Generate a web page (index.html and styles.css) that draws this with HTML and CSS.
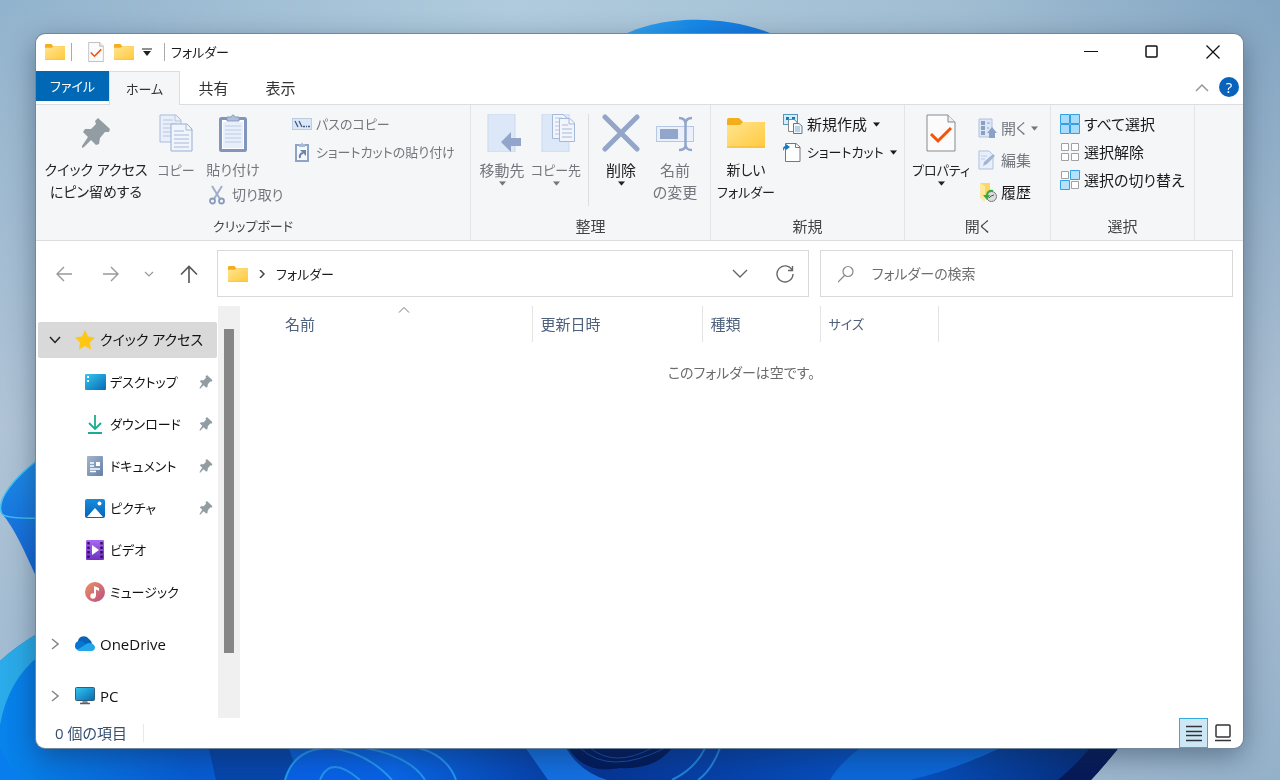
FILE: index.html
```html
<!DOCTYPE html>
<html lang="ja">
<head>
<meta charset="utf-8">
<meta name="viewport" content="width=device-width, initial-scale=1">
<title>フォルダー</title>
<link rel="stylesheet" href="styles.css">
</head>
<body>
<svg class="wallpaper" viewBox="0 0 1280 780" preserveAspectRatio="xMidYMid slice" aria-hidden="true">
  <defs>
    <linearGradient id="sky" x1="0" y1="0" x2="1" y2="0"><stop offset="0" stop-color="#92b3cd"/><stop offset=".4" stop-color="#b0cbdd"/><stop offset=".75" stop-color="#a0bdd2"/><stop offset="1" stop-color="#83a5c2"/></linearGradient>
    <linearGradient id="haze" x1="0" y1="0" x2="0" y2="1"><stop offset="0" stop-color="#c3cedb" stop-opacity="0"/><stop offset=".55" stop-color="#c3cedb" stop-opacity=".6"/><stop offset="1" stop-color="#a6bdd2" stop-opacity=".5"/></linearGradient>
    <linearGradient id="crest" x1="0" y1="0" x2="1" y2="0"><stop offset="0" stop-color="#36a9f2"/><stop offset=".5" stop-color="#1688ea"/><stop offset="1" stop-color="#1470d8"/></linearGradient>
    <linearGradient id="petal" x1="0" y1="0" x2="0" y2="1"><stop offset="0" stop-color="#1d8ce8"/><stop offset="1" stop-color="#1261d6"/></linearGradient>
    <linearGradient id="base" x1="0" y1="0" x2="1" y2="0"><stop offset="0" stop-color="#0784ec"/><stop offset=".17" stop-color="#075bd2"/><stop offset=".35" stop-color="#0967e8"/><stop offset=".53" stop-color="#063596"/><stop offset=".8" stop-color="#0754c8"/><stop offset="1" stop-color="#05276f"/></linearGradient>
  </defs>
  <rect width="1280" height="780" fill="url(#sky)"/>
  <rect width="1280" height="780" fill="url(#haze)"/>
  <path d="M615 40C655 13 735 13 785 40Z" fill="url(#crest)"/>
  <path d="M40 458C15 477-5 500 2 514C14 527 24 550 40 585Z" fill="url(#petal)"/>
  <path d="M40 458C15 477-5 500 2 514Q8 519 40 518" fill="none" stroke="#40c4f4" stroke-width="1.5"/>
  <path d="M0 661Q16 646 40 632V740H1125Q1105 765 1091 780H0Z" fill="url(#base)"/>
  <path d="M0 661Q16 646 40 632V655Q8 680 0 725Z" fill="#2babe9"/>
  <path d="M0 748Q8 768 24 780H0Z" fill="#087dee"/>
  <path d="M207 740H285C292 755 296 768 298 780H216Z" fill="#0646ac"/>
  <path d="M285 780Q294 748 330 748Q367 752 392 780" fill="#0862e7" stroke="#259af2" stroke-width="2"/>
  <path d="M320 780Q330 754 360 780M365 748Q410 756 425 780M418 748Q447 755 456 780" fill="none" stroke="#2395ef" stroke-width="2"/>
  <path d="M520 740H562Q575 770 607 780H548Z" fill="#1470e2"/>
  <path d="M568 748Q585 775 620 768Q655 770 672 748Z" fill="#021b5c"/>
  <path d="M590 748Q615 768 652 748M580 748Q610 776 665 748" fill="none" stroke="#144dad"/>
  <path d="M705 748Q696 768 672 780M720 748Q712 770 698 780" fill="none" stroke="#2185df" stroke-width="2"/>
  <path d="M860 748Q838 765 830 780H910Q960 768 1000 748Z" fill="#0b68da"/>
  <path d="M1090 740H1125Q1105 765 1091 780H1058Q1077 764 1090 748Z" fill="#061a59"/>
</svg>

<svg class="defs" aria-hidden="true">
  <defs>
    <linearGradient id="gold" x1="0" y1="0" x2="1" y2="1"><stop offset="0" stop-color="#ffe591"/><stop offset="1" stop-color="#ffc93d"/></linearGradient>
    <linearGradient id="desk" x1="0" y1="0" x2="1" y2="1"><stop offset="0" stop-color="#35c8ee"/><stop offset="1" stop-color="#0669b5"/></linearGradient>
    <linearGradient id="pic" x1="0" y1="0" x2="0" y2="1"><stop offset="0" stop-color="#168ddd"/><stop offset="1" stop-color="#0763b7"/></linearGradient>
    <linearGradient id="vid" x1="0" y1="0" x2="0" y2="1"><stop offset="0" stop-color="#a968f2"/><stop offset="1" stop-color="#7131c4"/></linearGradient>
    <linearGradient id="mus" x1="0" y1="0" x2="1" y2="1"><stop offset="0" stop-color="#ef9263"/><stop offset="1" stop-color="#b64f82"/></linearGradient>
    <linearGradient id="docg" x1="0" y1="0" x2="1" y2="1"><stop offset="0" stop-color="#a3b6cd"/><stop offset="1" stop-color="#647fa7"/></linearGradient>
    <symbol id="folder" viewBox="0 0 38 32"><path d="M0 3Q0 1 2 1H11Q13 1 14 3L16 5H37Q38 5 38 6V14H0Z" fill="#f5ae1b"/><path d="M0 8H13L16 5H37Q38 5 38 7V30Q38 31 37 31H1Q0 31 0 30Z" fill="url(#gold)"/><path d="M0 30H38" stroke="#f3bb33"/></symbol>
    <symbol id="pin" viewBox="0 0 28 30"><path d="M16 0L28 11L27 14L23 14L18 20L17 26L14 27L9 22L2 29L0 30L0 28L6 19L1 14L3 11L9 11L14 6L13 3Z" fill="#929ca3"/></symbol>
    <symbol id="checked" viewBox="0 0 30 38"><path d="M1 1H22L29 8V37H1Z" fill="#fbfbfb" stroke="#858b91"/><path d="M22 1V8H29" fill="#eee" stroke="#858b91"/><path d="M5 20L12 27L25 14" fill="none" stroke="#f4530c" stroke-width="3"/></symbol>
    <symbol id="pages" viewBox="0 0 34 38"><path d="M1 1H17L22 6V28H1Z" fill="#e8effa" stroke="#a9bcdc"/><path d="M16 1V7H22M4 6H14M4 10H18M4 14H18M4 18H18M4 22H18" fill="none" stroke="#b4c5e1"/><path d="M12 10H28L33 15V37H12Z" fill="#f0f5fc" stroke="#9aafd1"/><path d="M27 10V16H33M15 17H25M15 21H30M15 25H30M15 29H30M15 33H30" fill="none" stroke="#a7badb"/></symbol>
    <symbol id="down" viewBox="0 0 10 5"><path d="M1 0H9L5 5Z" fill="currentColor"/></symbol>
    <symbol id="right" viewBox="0 0 8 12"><path d="M1 1L7 6L1 11" fill="none" stroke="currentColor" stroke-width="1.5"/></symbol>
  </defs>
</svg>

<main class="window">
  <header class="titlebar">
    <svg class="i20" viewBox="0 0 38 32"><use href="#folder"/></svg>
    <span class="bar"></span>
    <button class="quick" aria-label="プロパティ"><svg class="i16" viewBox="0 0 30 38"><use href="#checked"/></svg></button>
    <button class="quick" aria-label="新しいフォルダー"><svg class="i20" viewBox="0 0 38 32"><use href="#folder"/></svg></button>
    <button class="quick more" aria-label="カスタマイズ"><svg width="10" height="8" viewBox="0 0 10 8"><path d="M0 1H10" stroke="#222"/><path d="M1 3H9L5 8Z" fill="#222"/></svg></button>
    <span class="bar"></span>
    <h1 class="kana">フォルダー</h1>
    <div class="controls">
      <button aria-label="最小化"><svg width="14" height="14" viewBox="0 0 14 14"><path d="M0 6.5H14" stroke="#111"/></svg></button>
      <button aria-label="最大化"><svg width="14" height="14" viewBox="0 0 14 14"><rect x="1" y="1" width="11" height="11" rx="1" fill="none" stroke="#111" stroke-width="1.5"/></svg></button>
      <button aria-label="閉じる"><svg width="14" height="14" viewBox="0 0 14 14"><path d="M.5 .5L13.5 13.5M13.5 .5L.5 13.5" stroke="#111" stroke-width="1.3"/></svg></button>
    </div>
  </header>

  <nav class="tabs" aria-label="リボン">
    <button class="file kana">ファイル</button>
    <button class="active kana">ホーム</button>
    <button>共有</button>
    <button>表示</button>
    <span class="grow"></span>
    <button class="collapse" aria-label="リボンの最小化"><svg width="14" height="8" viewBox="0 0 14 8"><path d="M1 7L7 1L13 7" fill="none" stroke="#999" stroke-width="1.5"/></svg></button>
    <button class="help" aria-label="ヘルプ">?</button>
  </nav>

  <section class="ribbon">
    <div class="group clipboard">
      <div class="tools">
        <button class="big pinbtn"><svg width="28" height="38" viewBox="0 0 28 30"><use href="#pin"/></svg><span class="mixed">クイック アクセス<br>にピン留めする</span></button>
        <button class="big copy off"><svg width="34" height="38" viewBox="0 0 34 38"><use href="#pages"/></svg><span class="kana">コピー</span></button>
        <div class="paste">
          <button class="big off"><svg width="28" height="38" viewBox="0 0 28 38"><rect x="1.5" y="4.5" width="25" height="32" rx="1" fill="#fff" stroke="#8296bd" stroke-width="3"/><rect x="4" y="8" width="20" height="26" fill="#e8effa"/><path d="M6 12H22M6 16H22M6 20H22M6 24H22M6 28H22" stroke="#bccbe4"/><path d="M8 7V3H12Q14-1 16 3H20V7Z" fill="#b1bfda" stroke="#879abd"/></svg><span class="mixed">貼り付け</span></button>
          <button class="row off cut"><svg width="16" height="20" viewBox="0 0 16 20"><path d="M3 1L11 14M13 1L5 14" stroke="#9fafc9" stroke-width="2"/><circle cx="3.5" cy="16" r="2.5" fill="none" stroke="#8a9cbb" stroke-width="1.8"/><circle cx="12.5" cy="16" r="2.5" fill="none" stroke="#8a9cbb" stroke-width="1.8"/></svg><span class="mixed">切り取り</span></button>
        </div>
        <div class="stack">
          <button class="row off"><svg width="20" height="20" viewBox="0 0 20 20"><rect x=".5" y="4.5" width="19" height="11" fill="#dce7f6" stroke="#bccce5"/><path d="M3 7L6 13M7 7L10 13M11 12.5H13M14 12.5H15M16 12.5H18" stroke="#40577f" stroke-width="1.3"/></svg><span class="kana">パスのコピー</span></button>
          <button class="row off"><svg width="20" height="20" viewBox="0 0 20 20"><rect x="4" y="3" width="12" height="16" fill="#f5f8fd" stroke="#8fa3c5" stroke-width="2"/><path d="M7 5V2H9Q10-1 11 2H13V5Z" fill="#a9b9d4"/><path d="M8 16Q7 12 11 11" fill="none" stroke="#6c84ae" stroke-width="2"/><path d="M8 8H14V14Z" fill="#6c84ae"/></svg><span class="kana">ショートカットの貼り付け</span></button>
        </div>
      </div>
      <h2 class="kana">クリップボード</h2>
    </div>

    <div class="group organize">
      <div class="tools">
        <button class="big off"><svg width="38" height="38" viewBox="0 0 38 38"><path d="M5 0H32V38H5Z" fill="#dce7f7" stroke="#cbd9ef"/><path d="M18 28L28 18V24H38V32H28V38Z" fill="#91a6ca"/></svg><span>移動先</span><svg class="arrow" viewBox="0 0 10 5"><use href="#down"/></svg></button>
        <button class="big off"><svg width="38" height="38" viewBox="0 0 38 38"><path d="M5 0H32V38H5Z" fill="#dce7f7" stroke="#cbd9ef"/><path d="M15.5 .5H26L31 5V24.5H15.5Z" fill="#f2f6fc" stroke="#a4b8d9"/><path d="M18 4H25M18 8H28M18 12H28M18 16H28M18 20H28" stroke="#b2c4e1"/><path d="M22.5 4.5H33L37.5 9V27.5H22.500Z" fill="#f2f6fc" stroke="#a4b8d9"/><path d="M32 4.5V10H37M25 11H31M25 15H35M25 19H35M25 23H35" fill="none" stroke="#a4b8d9"/></svg><span class="kana">コピー先</span><svg class="arrow" viewBox="0 0 10 5"><use href="#down"/></svg></button>
        <span class="split"></span>
        <button class="big"><svg width="38" height="38" viewBox="0 0 38 38"><path d="M3 3L35 35M35 3L3 35" stroke="#94a6c8" stroke-width="5" stroke-linecap="round"/></svg><span>削除</span><svg class="arrow" viewBox="0 0 10 5"><use href="#down"/></svg></button>
        <button class="big off"><svg width="38" height="38" viewBox="0 0 38 38"><rect x=".5" y="12.5" width="37" height="15" fill="#eaf1fc" stroke="#b5c7e3"/><rect x="4" y="15" width="18" height="10" fill="#91a6ca"/><path d="M23 4Q29 4 29.5 9V32Q29 36 23 36M36 4Q30 4 29.5 9M29.5 31Q30 36 36 36" fill="none" stroke="#91a6ca" stroke-width="2.5"/></svg><span>名前<br>の変更</span></button>
      </div>
      <h2>整理</h2>
    </div>

    <div class="group new">
      <div class="tools">
        <button class="big"><svg width="38" height="38" viewBox="0 0 38 32"><use href="#folder"/></svg><span class="mixed">新しい</span><span class="kana">フォルダー</span></button>
        <div class="stack">
          <button class="row"><svg width="20" height="20" viewBox="0 0 20 20"><rect x=".5" y=".5" width="14" height="10" fill="#d3efff" stroke="#5597bb"/><path d="M3 3H6V6H3ZM9 3H12V6H9Z" fill="#127cb7"/><path d="M5.5 5.5H11L14 8V17.5H5.5Z" fill="#fff" stroke="#888"/><path d="M10.5 9.5H16L19 12V19.5H10.5Z" fill="#eef6fd" stroke="#64798b"/><path d="M12 13H17M12 15H17M12 17H17" stroke="#8aa9c1"/></svg><span>新規作成</span><svg class="arrow" viewBox="0 0 10 5"><use href="#down"/></svg></button>
          <button class="row"><svg width="20" height="20" viewBox="0 0 20 20"><path d="M2.5 1.5H13L17 5V19.5H2.5Z" fill="#fff" stroke="#777"/><path d="M12.5 1.5V5.5H17" fill="none" stroke="#777"/><path d="M0 7Q0 4 3 4V2L7 5L3 8V6Q1 6 0 9Z" fill="#1478bd"/></svg><span class="kana">ショートカット</span><svg class="arrow" viewBox="0 0 10 5"><use href="#down"/></svg></button>
        </div>
      </div>
      <h2>新規</h2>
    </div>

    <div class="group open">
      <div class="tools">
        <button class="big"><svg width="30" height="38" viewBox="0 0 30 38"><use href="#checked"/></svg><span class="kana">プロパティ</span><svg class="arrow" viewBox="0 0 10 5"><use href="#down"/></svg></button>
        <div class="stack airy">
          <button class="row off"><svg width="20" height="20" viewBox="0 0 20 20"><path d="M1 1H14V19H1Z" fill="#dce7f7" stroke="#b0c2df"/><path d="M3 3H7V7H3ZM3 8H7V12H3ZM3 13H7V17H3Z" fill="#8b9fc3"/><path d="M9 5H12M9 10H11" stroke="#91a6ca"/><path d="M14 9L19 15H17V20H11V15H9Z" fill="#8ca1c6"/></svg><span>開く</span><svg class="arrow" viewBox="0 0 10 5"><use href="#down"/></svg></button>
          <button class="row off"><svg width="20" height="20" viewBox="0 0 20 20"><path d="M1 1H11L15 5V19H1Z" fill="#e8effa" stroke="#afc1df"/><path d="M5 16L6 12L15 4L17 6L9 14Z" fill="#a3b5d3"/><path d="M3 6H9M3 9H7" stroke="#bccce5"/></svg><span>編集</span></button>
          <button class="row"><svg width="20" height="20" viewBox="0 0 20 20"><path d="M2 1H12V19L8 16H2Z" fill="#ffd566"/><path d="M2 1L7 4V20L2 16Z" fill="#ffe9a0"/><circle cx="13.5" cy="14.5" r="5" fill="#ddd" stroke="#747b7f"/><path d="M11 16L13 14L16 13" fill="none" stroke="#555"/><path d="M15 9Q9 8 9 14" fill="none" stroke="#2fae3c" stroke-width="2"/><path d="M5 13L9 18L12 13Z" fill="#2fae3c"/></svg><span>履歴</span></button>
        </div>
      </div>
      <h2>開く</h2>
    </div>

    <div class="group select">
      <div class="tools">
        <div class="stack">
          <button class="row"><svg width="20" height="20" viewBox="0 0 20 20"><path d="M.5 .5H9.5V9.5H.5ZM10.5 .5H19.5V9.5H10.5ZM.5 10.5H9.5V19.5H.5ZM10.5 10.5H19.5V19.5H10.5Z" fill="#a9dcfb" stroke="#359fe4"/></svg><span>すべて選択</span></button>
          <button class="row"><svg width="20" height="20" viewBox="0 0 20 20"><path d="M1.5 1.5H8.5V8.5H1.5ZM11.5 1.5H18.5V8.5H11.5ZM1.5 11.5H8.5V18.5H1.5ZM11.5 11.5H18.5V18.5H11.5Z" fill="#fff" stroke="#a2a2a2"/></svg><span>選択解除</span></button>
          <button class="row"><svg width="20" height="20" viewBox="0 0 20 20"><path d="M1.5 1.5H8.5V8.5H1.5ZM11.5 11.5H18.5V18.5H11.5Z" fill="#fff" stroke="#a2a2a2"/><path d="M10.5 .5H19.5V9.5H10.5ZM.5 10.5H9.5V19.5H.5Z" fill="#b5e1fc" stroke="#359fe4"/></svg><span>選択の切り替え</span></button>
        </div>
      </div>
      <h2>選択</h2>
    </div>
  </section>

  <section class="navigation">
    <div class="history">
      <button aria-label="戻る"><svg width="18" height="18" viewBox="0 0 18 18"><path d="M17 9H2M9 2L2 9L9 16" fill="none" stroke="#999" stroke-width="1.4"/></svg></button>
      <button aria-label="進む"><svg width="18" height="18" viewBox="0 0 18 18"><path d="M1 9H16M9 2L16 9L9 16" fill="none" stroke="#999" stroke-width="1.4"/></svg></button>
      <button class="recent" aria-label="最近表示した場所"><svg width="10" height="6" viewBox="0 0 10 6"><path d="M1 1L5 5L9 1" fill="none" stroke="#999" stroke-width="1.2"/></svg></button>
      <button class="up" aria-label="上へ"><svg width="18" height="18" viewBox="0 0 18 18"><path d="M9 18V2M1 9.5L9 1.5L17 9.5" fill="none" stroke="#555" stroke-width="1.6"/></svg></button>
    </div>
    <div class="address">
      <svg class="i20" viewBox="0 0 38 32"><use href="#folder"/></svg>
      <svg class="crumb" viewBox="0 0 6 8"><path d="M1 0L5 4L1 8" fill="none" stroke="#444" stroke-width="1.5"/></svg>
      <button class="kana">フォルダー</button>
      <span class="grow"></span>
      <button class="toggle" aria-label="以前の場所"><svg width="16" height="10" viewBox="0 0 16 10"><path d="M1 1L8 8L15 1" fill="none" stroke="#666" stroke-width="1.4"/></svg></button>
      <button class="toggle" aria-label="最新の情報に更新"><svg width="18" height="18" viewBox="0 0 18 18"><path d="M16 5A8 8 0 1 0 17 9M16.5 1V5.5H12" fill="none" stroke="#666" stroke-width="1.4"/></svg></button>
    </div>
    <label class="search"><svg width="16" height="18" viewBox="0 0 16 18"><circle cx="10" cy="6.5" r="5" fill="none" stroke="#888" stroke-width="1.2"/><path d="M6.5 10.5L0 17" stroke="#888" stroke-width="1.2"/></svg><input class="mixed" type="search" placeholder="フォルダーの検索" aria-label="フォルダーの検索"></label>
  </section>

  <div class="content">
    <nav class="sidebar" aria-label="ナビゲーション">
      <a href="#quick" class="root selected mixed"><svg class="chev" viewBox="0 0 12 8"><path d="M1 1L6 6.5L11 1" fill="none" stroke="#222" stroke-width="1.5"/></svg><svg width="20" height="20" viewBox="0 0 20 20"><path d="M10 0L13 6.5L20 7.5L15 12.5L16 19.5L10 16L4 19.5L5 12.5L0 7.5L7 6.5Z" fill="#ffc714"/></svg><span>クイック アクセス</span></a>
      <a href="#desktop" class="kana"><svg width="22" height="20" viewBox="0 0 22 20"><rect x="1" y="2" width="21" height="16" rx="1" fill="url(#desk)"/><path d="M3 4H5V6H3ZM3 8H5V10H3Z" fill="#fff"/></svg><span>デスクトップ</span><svg class="pinned" viewBox="0 0 28 30"><use href="#pin"/></svg></a>
      <a href="#downloads" class="kana"><svg width="22" height="20" viewBox="0 0 22 20"><path d="M11 1V15M5 9L11 15L17 9M4 19H18" fill="none" stroke="#19ae8f" stroke-width="1.8"/></svg><span>ダウンロード</span><svg class="pinned" viewBox="0 0 28 30"><use href="#pin"/></svg></a>
      <a href="#documents" class="kana"><svg width="22" height="20" viewBox="0 0 22 20"><rect x="3" width="16" height="20" rx="1" fill="url(#docg)"/><path d="M6 7H10M6 10H10M6 13H16M6 15.5H12" stroke="#fff" stroke-width="1.5"/><rect x="12" y="6" width="4" height="4" fill="#fff"/></svg><span>ドキュメント</span><svg class="pinned" viewBox="0 0 28 30"><use href="#pin"/></svg></a>
      <a href="#pictures" class="kana"><svg width="22" height="20" viewBox="0 0 22 20"><rect x="1" y="1" width="20" height="19" rx="2" fill="url(#pic)"/><path d="M3 19L11 10L19 19Z" fill="#fff"/><circle cx="15.5" cy="5.5" r="2" fill="#fff"/></svg><span>ピクチャ</span><svg class="pinned" viewBox="0 0 28 30"><use href="#pin"/></svg></a>
      <a href="#videos" class="kana"><svg width="22" height="20" viewBox="0 0 22 20"><rect x="2" width="18" height="20" rx="1" fill="url(#vid)"/><path d="M4.5 2V19M17.5 2V19" stroke="#32115f" stroke-width="2.5" stroke-dasharray="2.5 2"/><path d="M8 5L15 10L8 15Z" fill="#fff"/></svg><span>ビデオ</span></a>
      <a href="#music" class="kana"><svg width="22" height="20" viewBox="0 0 22 20"><circle cx="11" cy="10" r="10" fill="url(#mus)"/><circle cx="9" cy="14" r="2.7" fill="#fff"/><path d="M10 14V4L15 6V9L12 7.5V14Z" fill="#fff"/></svg><span>ミュージック</span></a>
      <a href="#onedrive" class="root"><svg class="chev" viewBox="0 0 8 12"><use href="#right"/></svg><svg width="20" height="20" viewBox="0 0 20 20"><path d="M3 9A6 6 0 0 1 14 5Q17 7 17 11L19 13H2Z" fill="#0864b8"/><path d="M0 12Q0 7 5 7Q8 7 11 10L13 16H4Q0 16 0 12Z" fill="#0875d1"/><path d="M2 16L13 9Q19 9 20 13Q20 17 16 17H4Z" fill="#23a5ea"/></svg><span>OneDrive</span></a>
      <a href="#pc" class="root"><svg class="chev" viewBox="0 0 8 12"><use href="#right"/></svg><svg width="20" height="20" viewBox="0 0 20 20"><path d="M8 14H12L13 17H7Z" fill="#8a959e"/><rect x=".5" y="1.5" width="19" height="13" rx="1" fill="url(#desk)" stroke="#315f7b"/><path d="M5 17.5H15" stroke="#54616b" stroke-width="1.5"/></svg><span>PC</span></a>
    </nav>
    <div class="scrollbar"><span></span></div>
    <section class="files">
      <table>
        <thead><tr><th class="name" scope="col"><span>名前</span><svg class="sort" viewBox="0 0 12 6"><path d="M1 5.5L6 .5L11 5.5" fill="none" stroke="#777"/></svg></th><th class="date" scope="col">更新日時</th><th class="kind" scope="col">種類</th><th class="kind kana" scope="col">サイズ</th><td class="rest"></td></tr></thead>
      </table>
      <p class="mixed">このフォルダーは空です。</p>
    </section>
  </div>

  <footer class="status">
    <span class="count">0 個の項目</span>
    <span class="grow"></span>
    <button class="on" aria-label="詳細"><svg width="18" height="18" viewBox="0 0 18 18"><path d="M1 2.5H17M1 7.5H17M1 11.5H17M1 16.5H17" stroke="#333" stroke-width="1.5"/></svg></button>
    <button aria-label="大アイコン"><svg width="18" height="18" viewBox="0 0 18 18"><rect x="2" y="1" width="14" height="12" rx="1" fill="#fff" stroke="#333" stroke-width="1.5"/><path d="M1 16.5H17" stroke="#333" stroke-width="1.5"/></svg></button>
  </footer>
</main>
</body>
</html>
```

FILE: styles.css
```css
* { box-sizing: border-box; }

body {
  margin: 0;
  min-height: 100vh;
  padding: 34px 37px 32px 36px;
  display: flex;
  background: #9fb8cc;
  color: #1b1b1b;
  font: 15px/22px "Open Sans", "Noto Sans CJK JP", sans-serif;
  font-feature-settings: "palt";
}

button, input {
  margin: 0;
  padding: 0;
  border: 0;
  background: none;
  color: inherit;
  font: inherit;
  font-feature-settings: inherit;
}

h1, h2, p { margin: 0; font-size: 15px; font-weight: 400; }
svg { flex: none; display: block; }
a { color: inherit; text-decoration: none; }

.kana { font-size: 13px; }
.mixed { font-size: 14px; }

.wallpaper { position: fixed; inset: 0; width: 100%; height: 100%; z-index: -1; }
.defs { position: absolute; width: 0; height: 0; }
.grow { flex: 1; }
.i20 { width: 20px; height: 18px; }
.i16 { width: 16px; height: 20px; }

.window {
  flex: 1;
  min-width: 0;
  display: flex;
  flex-direction: column;
  overflow: hidden;
  background: #fff;
  border-radius: 9px;
  box-shadow: 0 0 0 1px #72889a, 0 8px 28px rgba(20, 40, 65, .45);
}

.titlebar { height: 37px; padding: 0 0 2px 9px; display: flex; align-items: center; }
.titlebar .bar { width: 1px; height: 18px; margin: 0 6px; background: #aaa; }
.quick { display: flex; margin-left: 10px; }
.quick.more { margin-right: 6px; margin-left: 8px; }
.controls { margin-left: auto; display: flex; height: 100%; }
.controls button { width: 61px; display: flex; align-items: center; justify-content: center; }

.tabs { height: 34px; display: flex; align-items: stretch; border-bottom: 1px solid #dcdde0; }
.tabs button { width: 67px; color: #333; }
.tabs .file { width: 73px; height: 30px; background: #0068b5; color: #fff; }
.tabs .active { width: 71px; height: 34px; background: #f5f6f8; border: 1px solid #dcdde0; border-bottom: 0; }
.tabs .collapse { width: 28px; display: flex; align-items: center; justify-content: center; }
.tabs .help { width: 20px; height: 20px; margin: 6px 4px 0 3px; border-radius: 50%; background: #0963bb; color: #fff; line-height: 20px; }

.ribbon { min-height: 136px; display: flex; background: #f5f6f8; border-bottom: 1px solid #dcdde0; }
.group { flex: none; display: flex; flex-direction: column; padding: 9px 0 3px; border-right: 1px solid #e2e4e7; white-space: nowrap; }
.group h2 { margin-top: auto; text-align: center; color: #444; }
.tools { display: flex; align-items: flex-start; }
.tools > * { flex: none; }
.clipboard { width: 435px; }
.clipboard .tools { padding-left: 8px; }
.organize { width: 240px; }
.organize .tools { padding-left: 4px; }
.new { width: 194px; }
.new .tools { padding-left: 2px; }
.open { width: 146px; }
.open .tools { padding-left: 6px; }
.select { width: 144px; }
.select .tools { padding-left: 9px; }
.big { width: 54px; display: flex; flex-direction: column; align-items: center; color: #222; }
.big > svg:first-child { margin-bottom: 7px; }
.pinbtn { width: 104px; }
.copy { width: 56px; }
.paste { width: 84px; }
.paste .big { width: 58px; }
.new .big { width: 66px; }
.open .big { width: 60px; }
.off { color: #73777d; }
.arrow { width: 9px; height: 5px; }
.split { width: 1px; height: 92px; margin: 0 5px; background: #dcdee2; }
.row { height: 20px; display: flex; align-items: center; gap: 4px; line-height: 20px; }
.row .arrow { margin-left: 1px; }
.row.cut { height: 28px; margin-left: 5px; gap: 7px; }
.stack { display: flex; flex-direction: column; align-items: flex-start; gap: 8px; padding-left: 4px; }
.open .stack { padding-left: 7px; }
.open .row { gap: 3px; }
.select .stack { padding-left: 0; }
.stack.airy { gap: 12px; padding-top: 4px; }

.navigation { padding: 9px 10px; display: flex; gap: 11px; }
.history { flex: none; width: 160px; padding-left: 4px; display: flex; align-items: center; gap: 19px; }
.history button { width: 28px; height: 28px; display: flex; align-items: center; justify-content: center; }
.history .recent { width: 10px; }
.history .up { margin-left: auto; margin-right: 3px; }
.address { flex: 3; height: 47px; padding: 0 14px 0 10px; display: flex; align-items: center; border: 1px solid #d9d9d9; }
.crumb { width: 6px; height: 8px; margin: 0 11px; }
.address .toggle { margin-left: 28px; }
.search { flex: 2; height: 47px; padding: 0 17px; display: flex; align-items: center; gap: 18px; border: 1px solid #d9d9d9; }
.search input { flex: 1; min-width: 0; outline: 0; }
.search input::placeholder { color: #6e6e6e; opacity: 1; }

.content { flex: 1; min-height: 0; display: flex; }
.sidebar { width: 182px; padding: 16px 1px 0 2px; display: flex; flex-direction: column; gap: 6px; }
.sidebar a { height: 36px; padding: 0 4px 0 46px; display: flex; align-items: center; gap: 4px; color: #111; white-space: nowrap; }
.sidebar .root { padding-left: 11px; gap: 5px; }
.sidebar .root:not(.selected) { margin-top: 10px; }
.sidebar .selected { background: #d9d9d9; border-radius: 2px; }
.chev { width: 12px; height: 12px; margin-right: 9px; color: #888; }
.pinned { width: 14px; height: 14px; margin-left: auto; }
.scrollbar { width: 22px; padding: 23px 6px 65px; background: #f0f0f0; display: flex; }
.scrollbar span { flex: 1; background: #868686; }
.files { flex: 1; min-width: 0; }
.files table { width: 100%; table-layout: fixed; border-collapse: collapse; }
.files th { height: 36px; padding: 0 8px; border-right: 1px solid #e4e4e4; text-align: left; font-weight: 400; color: #4d607c; }
.files .name { width: 292px; padding-left: 45px; position: relative; }
.files .date { width: 170px; }
.files .kind { width: 118px; }
.sort { position: absolute; left: 158px; top: 1px; width: 12px; height: 6px; }
.files p { padding-top: 20px; text-align: center; color: #6b6b6b; }

.status { height: 30px; padding: 0 6px 0 19px; display: flex; align-items: center; }
.count { padding-right: 16px; border-right: 1px solid #e8e8e8; line-height: 18px; color: #35506f; }
.status button { width: 29px; height: 30px; display: flex; align-items: center; justify-content: center; }
.status .on { background: #cce8f6; border: 1px solid #35aae0; }
```
